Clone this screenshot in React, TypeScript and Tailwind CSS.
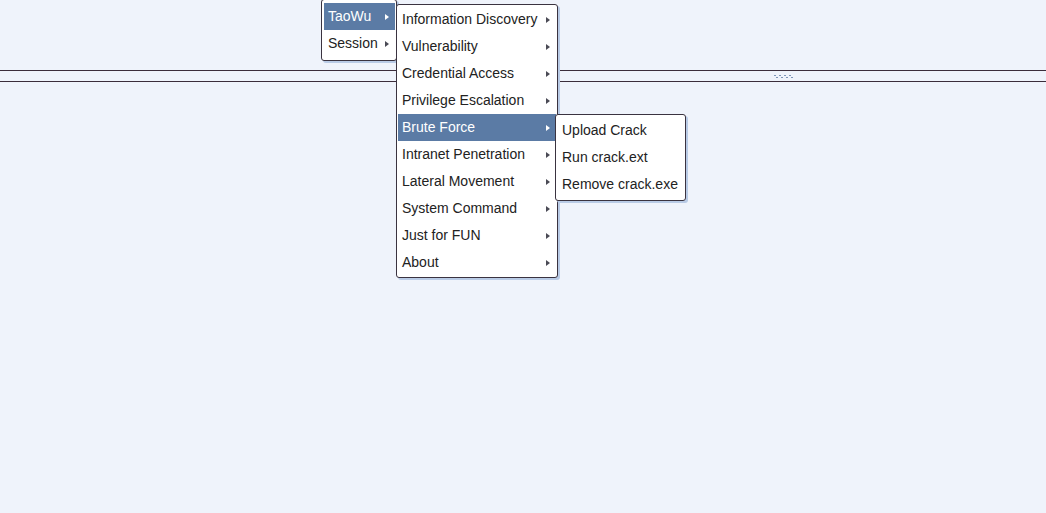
import React from "react";

const font = { fontFamily: '"Liberation Sans", Arial, sans-serif' };

function Arrow({ light }: { light?: boolean }) {
  return (
    <svg width="4" height="6" viewBox="0 0 4 6" className="shrink-0">
      <path d="M0 0 L4 3 L0 6 Z" fill={light ? "#ffffff" : "#4a4a55"} />
    </svg>
  );
}

function Item({
  label,
  active,
  arrow,
  pl = "pl-[4px]",
}: {
  label: string;
  active?: boolean;
  arrow?: boolean;
  pl?: string;
}) {
  return (
    <div
      className={`flex h-[27px] items-center justify-between pr-[6px] ${pl} text-[14px] ${
        active ? "bg-[#5b7ba5] text-white" : "text-[#222222]"
      }`}
    >
      <span className="whitespace-nowrap">{label}</span>
      {arrow && <Arrow light={active} />}
    </div>
  );
}

const menuBox =
  "absolute bg-white border border-[#3a3340] rounded-[3px] shadow-[2px_2px_0_#b9cbe6]";

export default function App() {
  const tools = [
    "Information Discovery",
    "Vulnerability",
    "Credential Access",
    "Privilege Escalation",
    "Brute Force",
    "Intranet Penetration",
    "Lateral Movement",
    "System Command",
    "Just for FUN",
    "About",
  ];
  return (
    <div className="relative h-[513px] w-full overflow-hidden bg-[#eff3fb]" style={font}>
      <div className="h-[70px]" />
      <div className="flex h-[12px] items-center border-y border-[#3b2d3b] pl-[774px]">
        <div className="flex flex-col gap-[1px]">
          <div className="flex gap-[3px]">
            {[0, 1, 2, 3].map((i) => (
              <span key={i} className="h-[1px] w-[2px] bg-[#7d95b8]" />
            ))}
          </div>
          <div className="flex gap-[3px] pl-[2px]">
            {[0, 1, 2, 3].map((i) => (
              <span key={i} className="h-[1px] w-[2px] bg-[#7d95b8]" />
            ))}
          </div>
        </div>
      </div>

      <div className={`${menuBox} left-[321px] top-[-1px] w-[76px] pl-[2px] pr-[1px] py-[3px]`}>
        <Item label="TaoWu" active arrow />
        <Item label="Session" arrow />
      </div>

      <div className={`${menuBox} left-[396px] top-[4px] w-[162px] p-[1px]`}>
        {tools.map((t) => (
          <Item key={t} label={t} arrow active={t === "Brute Force"} />
        ))}
      </div>

      <div className={`${menuBox} left-[555px] top-[114px] w-[131px] py-[2px] px-[1px]`}>
        <Item label="Upload Crack" pl="pl-[5px]" />
        <Item label="Run crack.ext" pl="pl-[5px]" />
        <Item label="Remove crack.exe" pl="pl-[5px]" />
      </div>
    </div>
  );
}
